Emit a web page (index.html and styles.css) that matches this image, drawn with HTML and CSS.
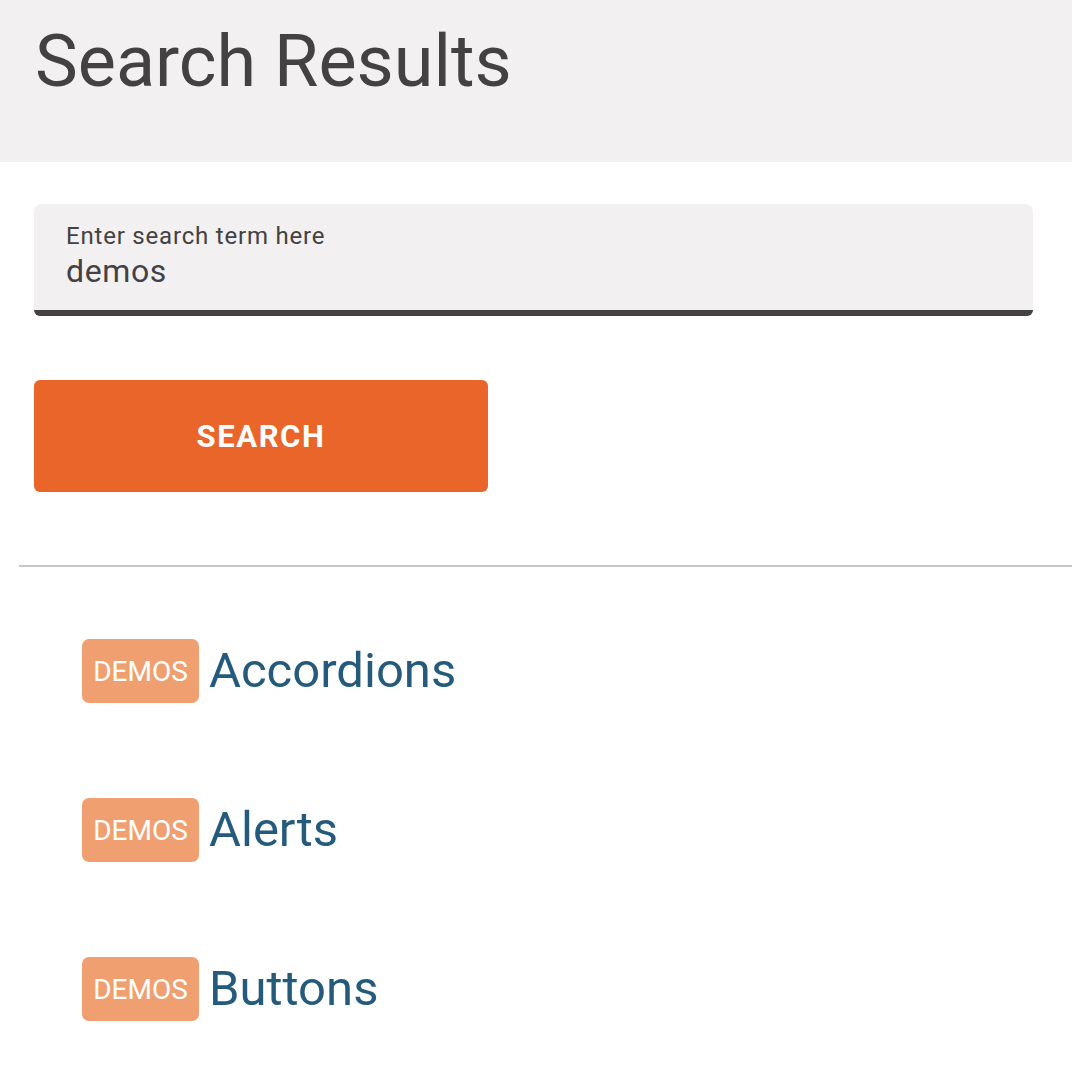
FILE: index.html
```html
<!DOCTYPE html>
<html lang="en">
<head>
<meta charset="utf-8">
<title>Search Results</title>
<link rel="stylesheet" href="styles.css">
</head>
<body>
<header class="page-header">
  <h1 class="page-title">Search Results</h1>
</header>
<main class="content">
  <form class="search-form">
    <label class="field">
      <span class="field-label">Enter search term here</span>
      <span class="field-value">demos</span>
    </label>
    <button type="button" class="search-btn">SEARCH</button>
  </form>
  <hr class="divider">
  <ul class="results">
    <li class="result"><span class="badge">DEMOS</span><a class="result-link" href="#">Accordions</a></li>
    <li class="result"><span class="badge">DEMOS</span><a class="result-link" href="#">Alerts</a></li>
    <li class="result"><span class="badge">DEMOS</span><a class="result-link" href="#">Buttons</a></li>
  </ul>
</main>
</body>
</html>
```
FILE: styles.css
```css
* { box-sizing: border-box; }
html, body { margin: 0; padding: 0; background: #ffffff; }
body { font-family: Roboto, "Liberation Sans", sans-serif; color: #434142; overflow: hidden; }

.page-header {
  background: #f2f0f1;
  height: 162px;
  padding: 0 35px;
  display: flex;
  align-items: flex-start;
}
.page-title {
  margin: 0;
  padding-top: 20px;
  font-size: 72px;
  font-weight: 400;
  line-height: 84px;
  color: #434142;
}

.content { padding: 42px 0 0 0; }

.search-form {
  padding: 0 39px 0 34px;
  display: flex;
  flex-direction: column;
  align-items: flex-start;
}
.field {
  width: 100%;
  height: 112px;
  background: #f2f0f1;
  border-radius: 8px 8px 6px 6px;
  border-bottom: 6px solid #434142;
  padding: 17px 32px 0;
  display: flex;
  flex-direction: column;
}
.field-label { font-size: 24px; line-height: 30px; color: #434142; letter-spacing: 0.8px; }
.field-value { font-size: 32px; line-height: 40px; color: #434142; letter-spacing: 0.6px; }

.search-btn {
  margin-top: 64px;
  width: 454px;
  height: 112px;
  border: 0;
  border-radius: 6px;
  background: #ea6529;
  color: #ffffff;
  font-family: Roboto, "Liberation Sans", sans-serif;
  font-weight: 700;
  font-size: 31px;
  letter-spacing: 1.6px;
}

.divider {
  margin: 73px 0 0 19px;
  border: 0;
  height: 2px;
  background: #c7c5c6;
}

.results {
  list-style: none;
  margin: 0;
  padding: 72px 0 0 82px;
  display: flex;
  flex-direction: column;
  gap: 95px;
}
.result { display: flex; align-items: center; gap: 10px; height: 64px; }
.badge {
  width: 117px;
  height: 64px;
  border-radius: 7px;
  background: #f0a070;
  color: #ffffff;
  font-size: 28px;
  display: flex;
  align-items: center;
  justify-content: center;
}
.result-link {
  color: #245a7c;
  text-decoration: none;
  font-size: 49px;
  line-height: 64px;
}
```
